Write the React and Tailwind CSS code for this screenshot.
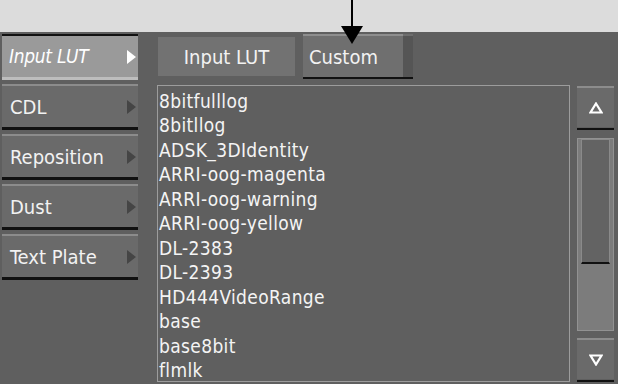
import React from 'react';

const font = { fontFamily: '"DejaVu Sans Condensed", "DejaVu Sans", sans-serif' };

const sideButtons = ['CDL', 'Reposition', 'Dust', 'Text Plate'];

const luts = [
  '8bitfulllog',
  '8bitllog',
  'ADSK_3DIdentity',
  'ARRI-oog-magenta',
  'ARRI-oog-warning',
  'ARRI-oog-yellow',
  'DL-2383',
  'DL-2393',
  'HD444VideoRange',
  'base',
  'base8bit',
  'flmlk',
];

function Tri({ color }) {
  return (
    <svg width="9" height="14" viewBox="0 0 9 14">
      <path d="M0 0 L9 7 L0 14 Z" fill={color} />
    </svg>
  );
}

function SideButton({ label }) {
  return (
    <div className="flex flex-col">
      <div className="h-[43px] bg-[#6a6a6a] border-t-2 border-[#8c8c8c] flex items-center justify-between pl-[8px] pr-[2px]">
        <span className="text-[20px] text-[#f2f2f2]">{label}</span>
        <Tri color="#454545" />
      </div>
      <div className="h-[3px] bg-[#111]" />
    </div>
  );
}

export default function App() {
  return (
    <div className="relative w-[618px] h-[384px] overflow-hidden bg-[#5f5f5f]" style={font}>
      {/* top strip */}
      <div className="h-[32px] bg-[#dcdcdc]" />

      <div className="flex pt-[2px]">
        {/* left menu */}
        <div className="w-[136px] ml-[2px] flex flex-col gap-[4px]">
          <div className="flex flex-col">
            <div className="h-[2px] bg-[#111]" />
            <div className="h-[41px] bg-[#9a9a9a] flex items-center justify-between pl-[7px] pr-[2px]">
              <span className="text-[19px] italic text-white tracking-[-0.3px]">Input LUT</span>
              <Tri color="#ffffff" />
            </div>
            <div className="h-[3px] bg-[#bdbdbd]" />
          </div>
          {sideButtons.map((b) => (
            <SideButton key={b} label={b} />
          ))}
        </div>

        {/* middle */}
        <div className="ml-[19px] w-[413px] flex flex-col">
          <div className="flex h-[45px] items-start">
            <div className="mt-[3px] ml-[1px] w-[137px] h-[39px] bg-[#727272] flex items-center justify-center">
              <span className="text-[20px] text-[#f2f2f2]">Input LUT</span>
            </div>
            <div className="ml-[8px] flex flex-col">
              <div className="flex h-[43px]">
                <div className="w-[100px] bg-[#6f6f6f] border-t-2 border-[#8e8e8e] flex items-center pl-[6px]">
                  <span className="text-[20px] text-[#f2f2f2]">Custom</span>
                </div>
                <div className="w-[10px] bg-[#555] border-t-2 border-[#6e6e6e]" />
              </div>
              <div className="h-[2px] bg-[#111]" />
            </div>
          </div>

          <div className="mt-[6px] h-[297px] border border-[#9c9c9c] pl-[1px] pt-[3px] overflow-hidden">
            {luts.map((l) => (
              <div key={l} className="text-[19px] leading-[24.45px] tracking-[0.35px] text-[#f4f4f4] whitespace-nowrap">
                {l}
              </div>
            ))}
          </div>
        </div>

        {/* scrollbar */}
        <div className="ml-[7px] w-[37px] flex flex-col mt-[52px]">
          <div className="h-[41px] bg-[#6a6a6a] border-t-2 border-[#8c8c8c] flex items-center justify-center">
            <svg width="14" height="12" viewBox="0 0 14 12">
              <path d="M7 1.5 L12.5 10.5 L1.5 10.5 Z" fill="none" stroke="#fff" strokeWidth="2.2" strokeLinejoin="miter" />
            </svg>
          </div>
          <div className="mt-[1px] h-[2px] bg-[#111]" />
          <div className="mt-[8px] h-[193px] bg-[#7c7c7c] border border-[#929292] flex flex-col">
            <div className="mx-[3px] h-[125px] bg-[#636363] border border-[#8a8a8a] border-b-2 border-b-[#111]" />
          </div>
          <div className="mt-[7px] h-[41px] bg-[#6a6a6a] border-t-2 border-[#8c8c8c] flex items-center justify-center">
            <svg width="14" height="12" viewBox="0 0 14 12">
              <path d="M1.5 1.5 L12.5 1.5 L7 10.5 Z" fill="none" stroke="#fff" strokeWidth="2.2" strokeLinejoin="miter" />
            </svg>
          </div>
          <div className="mt-[1px] h-[2px] bg-[#111]" />
        </div>
      </div>

      {/* pointer arrow overlay */}
      <svg className="absolute left-[340px] top-0" width="24" height="46" viewBox="0 0 24 46">
        <line x1="12" y1="0" x2="12" y2="27" stroke="#000" strokeWidth="2" />
        <path d="M1 26 L23 26 L12 44 Z" fill="#000" />
      </svg>
    </div>
  );
}
